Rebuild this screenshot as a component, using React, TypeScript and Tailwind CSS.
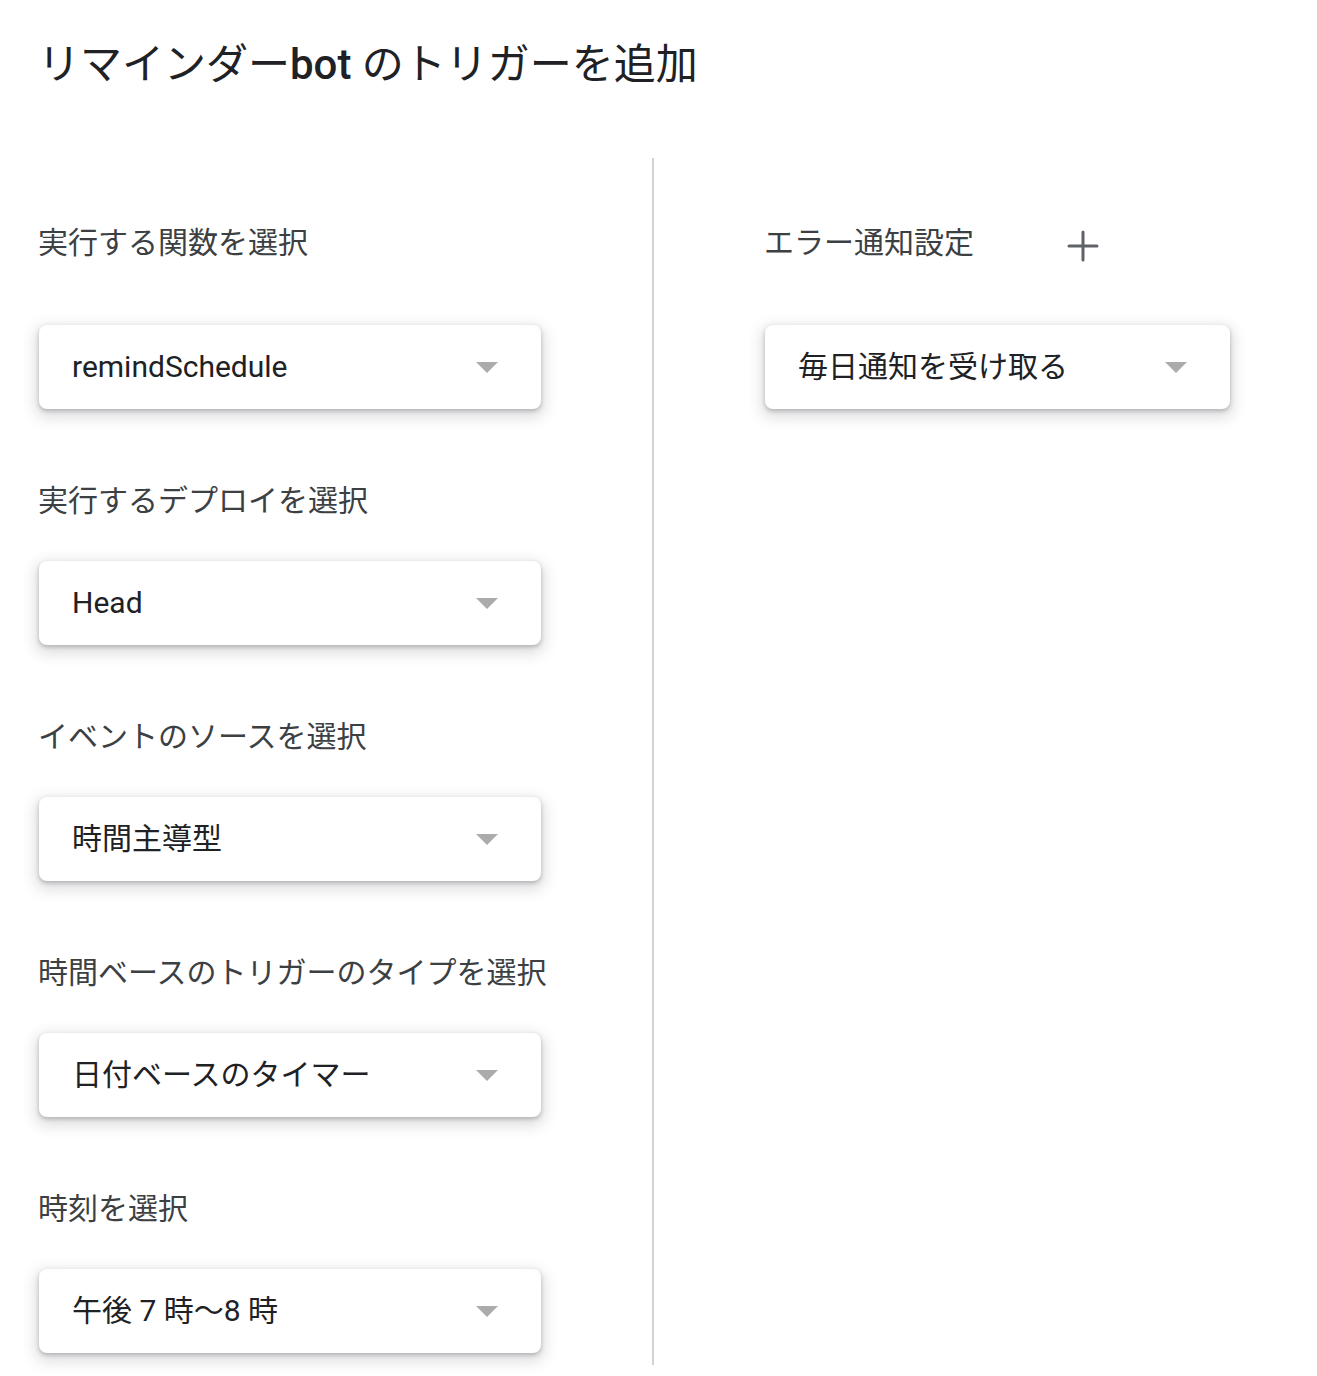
import React from 'react';
import { Plus } from 'lucide-react';

const font = { fontFamily: 'Roboto, "Noto Sans CJK JP", sans-serif' };

const Select: React.FC<{ value: string; wide?: boolean }> = ({ value, wide }) => (
  <div
    className={`flex items-center justify-between h-[84px] ${wide ? 'w-[502px]' : 'w-[465px]'} ml-px pl-[33px] pr-[43px] bg-white rounded-[8px] shadow-[0_2px_4px_rgba(60,64,67,0.3),0_5px_14px_4px_rgba(60,64,67,0.16)]`}
  >
    <span className="text-[30px] leading-[40px] text-[#202124]">{value}</span>
    <span className="w-0 h-0 border-l-[11px] border-r-[11px] border-t-[11px] border-l-transparent border-r-transparent border-t-[#ababab]" />
  </div>
);

const Field: React.FC<{ label: string; value: string; first?: boolean }> = ({ label, value, first }) => (
  <div className={first ? 'pt-[65px]' : 'pt-[72px]'}>
    <div className="text-[30px] leading-[40px] text-[#3c4043]">{label}</div>
    <div className={first ? 'mt-[62px]' : 'mt-[40px]'}>
      <Select value={value} wide />
    </div>
  </div>
);

const fields = [
  { label: '実行する関数を選択', value: 'remindSchedule' },
  { label: '実行するデプロイを選択', value: 'Head' },
  { label: 'イベントのソースを選択', value: '時間主導型' },
  { label: '時間ベースのトリガーのタイプを選択', value: '日付ベースのタイマー' },
  { label: '時刻を選択', value: '午後 7 時〜8 時' },
];

const App: React.FC = () => {
  return (
    <div className="w-[1317px] h-[1376px] bg-white overflow-hidden pl-[38px]" style={font}>
      {/* Dialog title */}
      <h1 className="pt-[40px] text-[42px] leading-[50px] font-normal text-[#202124]">
        リマインダー<span className="font-medium">bot</span> のトリガーを追加
      </h1>

      <div className="flex mt-[68px] h-[1207px]">
        {/* Left column */}
        <div className="w-[614px]">
          {fields.map((f, i) => (
            <Field key={f.label} label={f.label} value={f.value} first={i === 0} />
          ))}
        </div>

        <div className="w-[2px] bg-[#d2d2d2]" />

        {/* Right column */}
        <div className="pl-[110px]">
          <div className="mt-[65px] h-[40px] flex items-center">
            <span className="text-[30px] leading-[40px] text-[#3c4043]">エラー通知設定</span>
            <Plus className="ml-[85px] mt-[6px] shrink-0 w-[48px] h-[48px] text-[#5f6368]" strokeWidth={1.5} />
          </div>
          <div className="mt-[62px]">
            <Select value="毎日通知を受け取る" />
          </div>
        </div>
      </div>
    </div>
  );
};

export default App;
